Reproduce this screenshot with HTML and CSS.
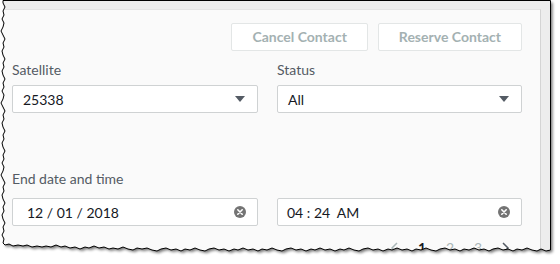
FILE: index.html
```html
<!DOCTYPE html>
<html>
<head>
<meta charset="utf-8">
<link rel="stylesheet" href="styles.css">
</head>
<body>
<div class="page">
  <div class="card">
    <div class="actions">
      <button class="btn">Cancel Contact</button>
      <button class="btn">Reserve Contact</button>
    </div>
    <div class="grid">
      <div class="field">
        <div class="label">Satellite</div>
        <div class="control">
          <span>25338</span>
          <svg class="caret" width="10" height="6" viewBox="0 0 10 6"><polygon points="0,0 10,0 5,6" fill="#545b64"/></svg>
        </div>
      </div>
      <div class="field">
        <div class="label">Status</div>
        <div class="control">
          <span>All</span>
          <svg class="caret" width="10" height="6" viewBox="0 0 10 6"><polygon points="0,0 10,0 5,6" fill="#545b64"/></svg>
        </div>
      </div>
    </div>
    <div class="label label-end">End date and time</div>
    <div class="grid">
      <div class="control control-date">
        <span>12 / 01 / 2018</span>
        <svg class="clear" width="12" height="12" viewBox="0 0 12 12"><circle cx="6" cy="6" r="6" fill="#747474"/><path d="M3.8 3.8 L8.2 8.2 M8.2 3.8 L3.8 8.2" stroke="#fff" stroke-width="1.6" stroke-linecap="round"/></svg>
      </div>
      <div class="control control-input">
        <span>04 : 24&nbsp;&nbsp;AM</span>
        <svg class="clear" width="12" height="12" viewBox="0 0 12 12"><circle cx="6" cy="6" r="6" fill="#747474"/><path d="M3.8 3.8 L8.2 8.2 M8.2 3.8 L3.8 8.2" stroke="#fff" stroke-width="1.6" stroke-linecap="round"/></svg>
      </div>
    </div>
    <div class="pager">
      <span class="pg"><svg width="8" height="12" viewBox="0 0 8 12"><polyline points="7,1 2,6 7,11" fill="none" stroke="#aab7b8" stroke-width="1.5"/></svg></span>
      <span class="pg pg-on">1</span>
      <span class="pg">2</span>
      <span class="pg">3</span>
      <span class="pg"><svg width="8" height="12" viewBox="0 0 8 12"><polyline points="1,1 6,6 1,11" fill="none" stroke="#545b64" stroke-width="1.5"/></svg></span>
    </div>
  </div>
  <svg class="edge" width="560" height="264" viewBox="0 0 560 264">
    <defs>
      <filter id="blur" x="-5%" y="-5%" width="110%" height="110%"><feGaussianBlur stdDeviation="1.4"/></filter>
      <mask id="outside" maskUnits="userSpaceOnUse" x="0" y="0" width="560" height="264">
        <rect x="0" y="0" width="560" height="264" fill="#fff"/>
        <use href="#paper" fill="#000"/>
      </mask>
      <path id="paper" d="M3,0.5 L550.5,0.5 L550.5,250 L546,251 541,249 537,251 532,250 527,248 522,250 517,249 513,251 508,249 503,250 498,248 493,249 489,251 484,249 479,250 474,248 469,250 464,249 460,251 455,249 450,250 445,248 440,249 436,251 431,250 426,248 421,250 416,249 412,251 407,249 402,250 397,248 392,250 388,249 383,251 378,249 373,250 368,248 363,249 359,251 354,250 349,248 344,250 340,249 335,251 330,249 325,250 320,248 315,250 311,249 306,251 301,249 296,250 291,248 286,249 282,251 277,250 272,248 267,250 262,249 258,251 253,249 248,250 243,248 238,250 234,249 229,251 224,249 219,250 214,248 209,249 205,251 200,250 195,248 190,250 185,249 181,251 176,249 171,250 166,248 161,249 157,251 152,250 147,248 142,249 137,248 133,250 128,249 123,247 118,249 113,248 109,249 104,247 99,248 94,246 89,248 85,247 80,249 75,247 70,248 65,246 61,247 56,245 51,247 46,246 42,247 37,246 32,247 27,245 23,246 18,245 13,246 9,244 5,245 3,243 4,239 2,235 4,231 3,227 5,223 3,219 2,215 4,211 3,207 5,203 3,199 2,195 4,191 3,187 5,183 3,179 1,175 3,171 4,167 2,163 4,159 3,155 5,151 3,147 2,143 4,139 3,135 5,131 3,127 2,123 4,119 3,115 5,111 3,107 1,103 3,99 4,95 2,91 4,87 3,83 5,79 3,75 2,71 4,67 3,63 5,59 3,55 2,51 4,47 3,43 5,39 3,35 1,31 3,27 4,23 2,19 4,15 3,11 5,7 3,3 Z"/>
    </defs>
    <g mask="url(#outside)">
      <rect x="0" y="0" width="560" height="264" fill="#fff"/>
      <use href="#paper" transform="translate(2,2)" fill="#000" opacity="0.55" filter="url(#blur)"/>
    </g>
    <use href="#paper" fill="none" stroke="#000" stroke-width="1"/>
  </svg>
</div>
</body>
</html>
```

FILE: styles.css
```css
html, body {
  margin: 0;
  padding: 0;
  background: #ffffff;
}

body {
  font-family: Lato, "Open Sans", "DejaVu Sans", sans-serif;
  color: #16191f;
}

.page {
  position: relative;
  width: 560px;
  height: 264px;
  overflow: hidden;
  background: #ededed;
}

.card {
  box-sizing: border-box;
  width: 541px;
  height: 260px;
  margin-top: 9px;
  padding: 0 18px 0 12px;
  background: #fafafa;
  border-top: 1px solid #e4e4e4;
  border-right: 1px solid #d4d4d4;
}

.actions {
  display: flex;
  justify-content: flex-end;
  gap: 10px;
  margin-top: 13px;
}

.btn {
  box-sizing: border-box;
  height: 28px;
  padding: 0 20px;
  background: #ffffff;
  border: 1px solid #e3e6e6;
  border-radius: 2px;
  color: #a4b1b2;
  font-family: Lato, "Open Sans", sans-serif;
  font-weight: bold;
  font-size: 14px;
  line-height: 26px;
}

.grid {
  display: grid;
  grid-template-columns: 246px 245px;
  column-gap: 19px;
}

.label {
  font-size: 14px;
  line-height: 18px;
  color: #545b64;
  margin-top: 10px;
  margin-bottom: 6px;
}

.label-end {
  margin-top: 57px;
  margin-bottom: 10px;
}

.control {
  box-sizing: border-box;
  height: 28px;
  display: flex;
  align-items: center;
  justify-content: space-between;
  padding: 0 12px 0 10px;
  background: #ffffff;
  border: 1px solid #cfd2d3;
  border-radius: 2px;
  font-size: 14px;
  color: #16191f;
}

.control-date {
  padding: 0 11px 0 14px;
}

.control-input {
  padding: 0 11px 0 9px;
}

.caret, .clear {
  display: block;
  flex: none;
}

.pager {
  display: flex;
  justify-content: flex-end;
  padding-right: 2px;
  margin-top: 14px;
  font-size: 14px;
  line-height: 16px;
  color: #aab7b8;
}

.pg {
  width: 28px;
  display: flex;
  justify-content: center;
  align-items: flex-start;
}

.pg svg {
  display: block;
  margin-top: 2px;
}

.pg-on {
  color: #16191f;
  font-weight: bold;
}

.edge {
  position: absolute;
  left: 0;
  top: 0;
  pointer-events: none;
}
```
